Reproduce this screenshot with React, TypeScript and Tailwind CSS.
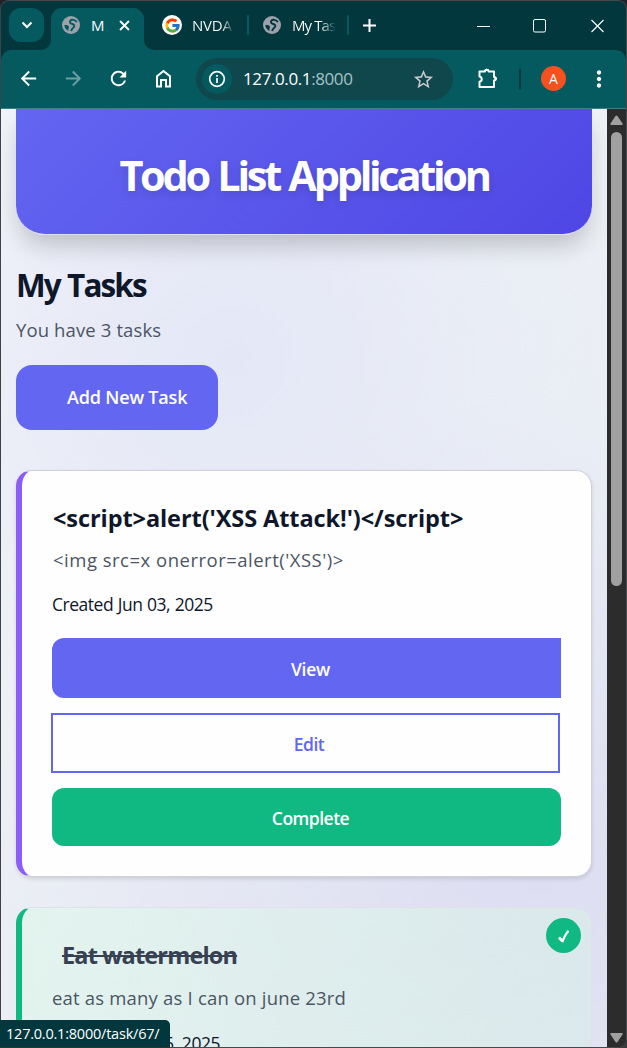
import type { ReactNode } from "react";
import { MdRefresh, MdStarBorder, MdMoreVert, MdArrowBack, MdArrowForward } from "react-icons/md";
import { FcGoogle } from "react-icons/fc";

function Divider() {
  return <div className="h-[20px] w-[2px] shrink-0 rounded-full bg-[#055a5f]" />;
}

function Globe({ className }: { className: string }) {
  return (
    <svg className={`shrink-0 ${className}`} width="18" height="18" viewBox="0 0 18 18" fill="none" stroke="currentColor">
      <circle cx="9" cy="9" r="9" fill="#9da2aa" stroke="none" />
      <path d="M14.800 6.200C13.500 3.500 9.500 3.200 8.300 4.800c-1 1.700.2 2.700 2 3.200 2 .7 2.600 2 1.400 3.400-1 1-2.200 1-2.500 3.800" strokeWidth="1.900" />
      <path d="M2.300 9.300c2-.6 4.300-.1 4.600 1.500.2 1.500-.8 1.300-.3 4.200-2.300-.8-4-2.900-4.300-5.700z" fill="currentColor" stroke="none" />
    </svg>
  );
}

function TabStrip() {
  return (
    <div className="flex h-[49px] w-full shrink-0 text-white">
      <div className="ml-[8px] mt-[7px] flex h-[34px] w-[35px] shrink-0 items-center justify-center rounded-[12px] bg-[#055a5f]">
        <svg width="12" height="8" viewBox="0 0 12 8" fill="none" stroke="white" strokeWidth="2">
          <path d="M1.500 1.500 6 6l4.500-4.500" />
        </svg>
      </div>
      <div className="relative ml-[7px] mt-[7px] flex h-[42px] w-[93px] shrink-0 rounded-t-[11px] bg-[#055a5f]">
        <svg className="absolute bottom-0 -left-[10px]" width="10" height="10" viewBox="0 0 10 10">
          <path d="M10 0v10H0A10 10 0 0 0 10 0Z" fill="#055a5f" />
        </svg>
        <svg className="absolute bottom-0 -right-[10px]" width="10" height="10" viewBox="0 0 10 10">
          <path d="M0 0v10h10A10 10 0 0 1 0 0Z" fill="#055a5f" />
        </svg>
        <Globe className="ml-[11px] mt-[8px] text-[#055a5f]" />
        <span className="ml-[11px] w-[13px] overflow-hidden pt-[6px] text-[15px] leading-[22px]">M</span>
        <svg className="ml-[15px] mt-[12px]" width="11" height="11" viewBox="0 0 11 11" stroke="white" strokeWidth="1.800">
          <path d="m1 1 9 9M10 1l-9 9" />
        </svg>
      </div>
      <div className="ml-[18px] mt-[14px] flex h-[20px] w-[20px] shrink-0 items-center justify-center rounded-full bg-white">
        <FcGoogle size={17} />
      </div>
      <span className="ml-[10px] mt-[13px] w-[42px] shrink-0 overflow-hidden bg-gradient-to-r from-white from-70% to-transparent bg-clip-text text-[15px] leading-[22px] tracking-[-0.2px] text-transparent">
        NVDA
      </span>
      <div className="ml-[13px] mt-[14px]">
        <Divider />
      </div>
      <Globe className="ml-[14px] mt-[15px] text-[#02383d]" />
      <span className="ml-[11px] mt-[13px] w-[44px] shrink-0 overflow-hidden whitespace-nowrap bg-gradient-to-r from-white from-65% to-transparent to-100% bg-clip-text text-[15px] leading-[22px] tracking-[-0.9px] text-transparent">
        My Tasks
      </span>
      <div className="ml-[11px] mt-[14px]">
        <Divider />
      </div>
      <svg className="ml-[14px] mt-[18px] shrink-0" width="13" height="13" viewBox="0 0 13 13" stroke="white" strokeWidth="2">
        <path d="M6.500 0v13M0 6.500h13" />
      </svg>
      <div className="ml-auto mr-[22px] flex items-center">
        <svg width="13" height="14" viewBox="0 0 13 14" stroke="white">
          <path d="M0 7.500h13" />
        </svg>
        <svg className="ml-[43px]" width="14" height="14" viewBox="0 0 14 14" fill="none" stroke="white">
          <rect x=".5" y=".5" width="12" height="12.500" rx="1.500" />
        </svg>
        <svg className="ml-[44px]" width="13" height="14" viewBox="0 0 13 14" stroke="white" strokeWidth="1.100">
          <path d="M.5 1 12.500 13M12.500 1 .5 13" />
        </svg>
      </div>
    </div>
  );
}

function Toolbar() {
  return (
    <div className="flex h-[59px] w-full shrink-0 items-center rounded-t-[10px] border-b border-[#3b8286] bg-[#055a5f] text-white">
      <MdArrowBack className="mb-[2px] ml-[16px] shrink-0" size={23} />
      <MdArrowForward className="mb-[2px] ml-[22px] shrink-0 text-[#6b9fa2]" size={23} />
      <MdRefresh className="mb-[2px] ml-[22px] shrink-0" size={23} />
      <svg className="mb-[2px] ml-[25px] shrink-0" width="17" height="19" viewBox="0 0 17 19" fill="none" stroke="white" strokeWidth="2">
        <path d="M2 7.200 8.500 2l6.500 5.200V17.500H11V11H6v6.500H2z" />
      </svg>
      <div className="ml-[24px] flex h-[42px] w-[257px] shrink-0 items-center rounded-full bg-[#10474d]">
        <div className="ml-[6px] flex h-[30px] w-[30px] shrink-0 items-center justify-center rounded-full bg-[#055a5f]">
          <svg width="18" height="18" viewBox="0 0 18 18" fill="none" stroke="white" strokeWidth="1.700">
            <circle cx="9" cy="9" r="7.300" />
            <path d="M9 8v5M9 5v1.800" />
          </svg>
        </div>
        <span className="ml-[11px] text-[17px] leading-[24px] tracking-[-0.400px]">
          127.0.0.1<span className="text-[#a5c3c6]">:8000</span>
        </span>
        <MdStarBorder className="ml-auto mr-[18px] text-[#c9c9cc]" size={23} />
      </div>
      <svg className="mb-[2px] ml-[24px] shrink-0" width="22" height="22" viewBox="0 0 22 22">
        <path
          d="M2.500 4.500H8a1.500 1.500 0 0 1 3.600 0H17v5.400a1.700 1.700 0 0 1 0 3.600v6.500H2.500v-5.200c3-.7 3-4.600 0-5.200z"
          fill="none"
          stroke="white"
          strokeWidth="2"
          strokeLinejoin="round"
        />
        <path d="M7.500 4a2.300 2.300 0 0 1 4.600 0zM17.500 9.400a2.300 2.300 0 0 1 0 4.600z" fill="white" />
      </svg>
      <div className="ml-[20px] h-[20px] w-[2px] bg-[#02383d]" />
      <div className="mb-px ml-[20px] flex h-[25px] w-[25px] shrink-0 items-center justify-center rounded-full bg-[#f4511e] text-[14px]">A</div>
      <MdMoreVert className="mb-px ml-[20px] shrink-0" size={26} />
    </div>
  );
}

function TaskCard({ className, children }: { className: string; children: ReactNode }) {
  return (
    <div className={`relative shrink-0 rounded-[16px] border border-l-[6px] pl-[30px] pr-[30px] pt-[31px] ${className}`}>
      {children}
    </div>
  );
}

function Page() {
  return (
    <main className="flex h-full w-[606px] shrink-0 flex-col overflow-hidden bg-[radial-gradient(ellipse_440px_440px_at_230px_250px,#e4e7f6_0%,transparent_100%),radial-gradient(ellipse_600px_480px_at_540px_770px,#dddef2_0%,transparent_100%),linear-gradient(135deg,#f5f7fb_0%,#edf1f5_45%,#e6ebf2_100%)] pl-[15px] pr-[15px]">
      <header className="flex h-[126px] shrink-0 justify-center rounded-b-[29px] border-b border-[#dfe0f4] bg-[linear-gradient(135deg,#6366f1,#4f46e5)] pt-[40px] shadow-[0_14px_24px_-4px_rgba(0,0,0,0.2)]">
        <h1 className="whitespace-nowrap text-[41.500px] font-bold leading-[52px] tracking-[-3.300px] text-white [text-shadow:0_4px_8px_rgba(0,0,0,0.12)] [word-spacing:2px]">
          Todo List Application
        </h1>
      </header>
      <h2 className="mt-[30px] text-[31.500px] font-bold leading-[40px] tracking-[-1.900px] text-[#0f172a] [word-spacing:1px]">My Tasks</h2>
      <p className="mt-[11px] text-[18.500px] leading-[28px] tracking-[0.120px] text-[#4b5563]">You have 3 tasks</p>
      <button className="mt-[21px] h-[65px] w-[202px] shrink-0 rounded-[16px] bg-[#6366f1] pl-[51px] text-left text-[18px] font-semibold tracking-[-0.180px] text-white">
        Add New Task
      </button>

      <TaskCard className="mt-[40px] h-[407px] border-[#cfd0dc] border-l-[#8b5cf6] bg-[#fefefe] shadow-[0_2px_4px_rgba(0,0,0,0.12)]">
        <h3 className="whitespace-nowrap pl-px text-[23.500px] font-bold leading-[32px] tracking-[-0.080px] text-[#0f172a]">
          {"<script>alert('XSS Attack!')</script>"}
        </h3>
        <p className="mt-[12px] whitespace-nowrap pl-px text-[18.500px] leading-[28px] tracking-[0.500px] text-[#4b5563]">
          {"<img src=x onerror=alert('XSS')>"}
        </p>
        <p className="mt-[16px] text-[17.500px] leading-[28px] tracking-[-0.480px] text-[#0f172a] [word-spacing:0.500px]">Created Jun 03, 2025</p>
        <div className="mt-[20px] flex w-[509px] flex-col gap-[15px] text-[17.500px] font-semibold tracking-[-0.500px]">
          <button className="h-[60px] rounded-l-[12px] bg-[#6366f1] pl-[8px] pt-[3px] tracking-[-0.250px] text-white">View</button>
          <button className="-ml-px mr-px h-[60px] border-2 border-[#6366f1] pl-[7px] pt-[3px] text-[#6366f1]">Edit</button>
          <button className="h-[58px] rounded-[12px] bg-[#10b981] pl-[8px] pt-[2px] text-white">Complete</button>
        </div>
      </TaskCard>

      <TaskCard className="mt-[30px] h-[300px] border-[#e0e0ea] border-l-[#10b981] bg-[linear-gradient(120deg,rgba(224,246,236,0.7),rgba(210,240,225,0.4))]">
        <div className="absolute right-[10px] top-[10px] flex h-[35px] w-[35px] items-center justify-center rounded-full bg-[#10b981]">
          <svg className="ml-px mt-[2px]" width="12" height="13" viewBox="0 0 12 13" fill="none" stroke="white">
            <path d="M1 7.500 4.300 11" strokeWidth="2.800" />
            <path d="M4.300 12.200C5.800 7.500 8 3.500 10.500.8" strokeWidth="2" />
          </svg>
        </div>
        <h3 className="whitespace-nowrap pl-[10px] text-[23.500px] font-bold leading-[32px] tracking-[-0.840px] text-[#374151]">
          <span className="line-through decoration-2">Eat watermelon</span>
        </h3>
        <p className="mt-[13px] whitespace-nowrap text-[18.500px] leading-[28px] tracking-[0.190px] text-[#4b5563]">
          eat as many as I can on june 23rd
        </p>
        <p className="mt-[17px] whitespace-nowrap text-[17.500px] leading-[28px] tracking-[-0.440px] text-[#0f172a]">Created May 16, 2025</p>
      </TaskCard>
    </main>
  );
}

function Scrollbar() {
  return (
    <div className="flex w-[19px] shrink-0 flex-col items-center bg-[#2c2c2c]">
      <svg className="mt-[6px] shrink-0" width="13" height="11" viewBox="0 0 13 11" fill="#a0a0a0">
        <path d="M5.500 1q1-1 2 0l5 7.500q.8 1.500-.8 1.500H1.300q-1.600 0-.8-1.500z" />
      </svg>
      <div className="mt-[6px] h-[454px] w-[11px] rounded-full bg-[#a0a0a0]" />
      <svg className="mb-[4px] mt-auto shrink-0" width="13" height="11" viewBox="0 0 13 11" fill="#a0a0a0">
        <path d="M5.500 10q1 1 2 0l5-7.500Q13.300 1 11.700 1H1.300Q-.3 1 .5 2.500z" />
      </svg>
    </div>
  );
}

export default function App() {
  return (
    <div className="relative h-[1048px] w-[627px] overflow-hidden bg-[linear-gradient(#22222b,#3a3a3a_20%,#2f3236_53%,#a8873e_54%,#a8873e_60%,#333_61%,#3a3a3a)] font-['Open_Sans','Segoe_UI',sans-serif]">
      <div className="flex h-full flex-col overflow-hidden rounded-t-[9px] rounded-br-[9px] border border-[#46484a] border-l-[#3f4346] bg-[#02383d]">
        <TabStrip />
        <Toolbar />
        <div className="flex min-h-0 flex-1">
          <Page />
          <Scrollbar />
        </div>
      </div>
      <div className="absolute bottom-0 left-0 h-[28px] w-[170px] rounded-tr-[5px] border-b border-[#333] bg-[#02383d] pl-[6px] text-[14.500px] leading-[27px] tracking-[-0.220px] text-white">
        127.0.0.1:8000/task/67/
      </div>
    </div>
  );
}
